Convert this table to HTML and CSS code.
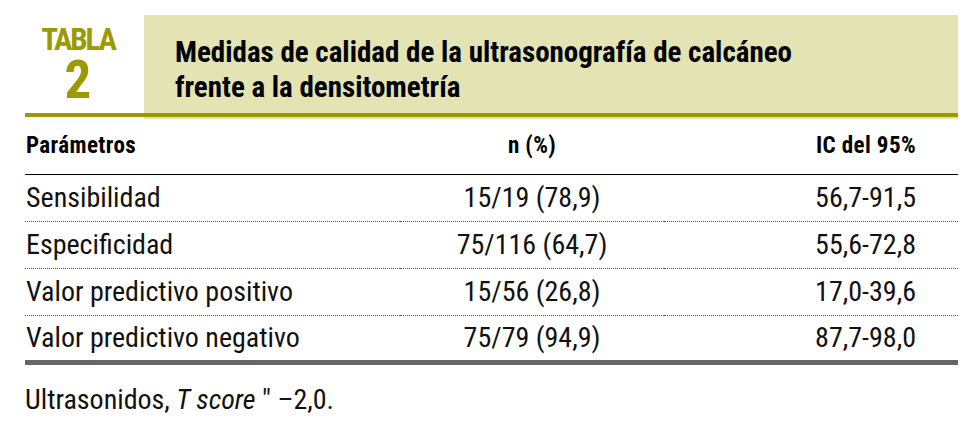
FILE: index.html
```html
<!DOCTYPE html>
<html lang="es">
<head>
  <meta charset="UTF-8" />
  <title>Tabla 2</title>
  <link rel="stylesheet" href="styles.css">
</head>
<body>

  <div class="table-head">
    <div class="table-label">
      <div class="label-word">TABLA</div>
      <div class="label-num">2</div>
    </div>
    <div class="table-title">
      Medidas de calidad de la ultrasonografía de calcáneo<br>
      frente a la densitometría
    </div>
  </div>

  <table class="data">
    <thead>
      <tr>
        <th class="col-name">Parámetros</th>
        <th class="col-n">n (%)</th>
        <th class="col-ic">IC del 95%</th>
      </tr>
    </thead>
    <tbody>
      <tr>
        <td class="col-name">Sensibilidad</td>
        <td class="col-n">15/19 (78,9)</td>
        <td class="col-ic">56,7-91,5</td>
      </tr>
      <tr>
        <td class="col-name">Especificidad</td>
        <td class="col-n">75/116 (64,7)</td>
        <td class="col-ic">55,6-72,8</td>
      </tr>
      <tr>
        <td class="col-name">Valor predictivo positivo</td>
        <td class="col-n">15/56 (26,8)</td>
        <td class="col-ic">17,0-39,6</td>
      </tr>
      <tr>
        <td class="col-name">Valor predictivo negativo</td>
        <td class="col-n">75/79 (94,9)</td>
        <td class="col-ic">87,7-98,0</td>
      </tr>
    </tbody>
  </table>

  <p class="note">Ultrasonidos, <i>T score</i> ″ –2,0.</p>

</body>
</html>
```

FILE: styles.css
```css
* {
  box-sizing: border-box;
}

body {
  margin: 0;
  padding: 15px 13px 0 25px;
  background-color: #ffffff;
  font-family: 'Roboto Condensed', 'Liberation Sans', sans-serif;
  color: #111111;
}

.table-head {
  position: relative;
  display: flex;
  height: 104px;
}

.table-head::after {
  content: "";
  position: absolute;
  left: 0;
  right: 0;
  top: 98px;
  height: 4px;
  background-color: #9c9a00;
}

.table-label {
  width: 119px;
  display: flex;
  flex-direction: column;
  align-items: center;
  padding: 10px 13px 0 0;
  color: #9c9a00;
  font-weight: bold;
}

.label-word {
  font-size: 31px;
  line-height: 30px;
  letter-spacing: -2.2px;
}

.label-num {
  margin-top: 2px;
  font-size: 53px;
  line-height: 46px;
}

.table-title {
  flex: 1;
  background-color: #e3e3b4;
  padding: 20px 0 0 31px;
  font-size: 29px;
  font-weight: bold;
  line-height: 35px;
  color: #000000;
}

.data {
  width: 100%;
  border-collapse: collapse;
  font-size: 28px;
}

.data th {
  font-size: 23px;
  font-weight: bold;
  letter-spacing: 0.4px;
  height: 55px;
  padding-top: 0;
  border-bottom: 1.5px solid #000000;
  color: #000000;
}

.data td {
  height: 47px;
  border-bottom: 1px dotted #555555;
}

.data tbody tr:last-child td {
  border-bottom: 5px solid #666666;
}

.col-name {
  width: 375px;
  text-align: left;
}

.col-n {
  width: 264px;
  text-align: center;
}

.col-ic {
  text-align: right;
  padding-right: 42px;
}

.note {
  margin: 18px 0 0;
  font-size: 28px;
}
```
